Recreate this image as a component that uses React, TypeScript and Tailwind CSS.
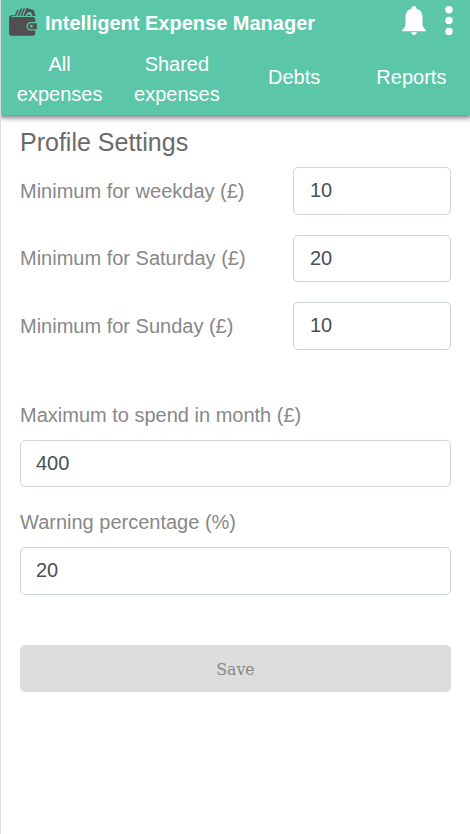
import React from "react";

const tabs = [
  { label: "All expenses", offset: "pt-px" },
  { label: "Shared expenses", offset: "pt-px" },
  { label: "Debts", offset: "pt-[14px]" },
  { label: "Reports", offset: "pt-[14px]" },
];

const minimums = [
  { label: "Minimum for weekday (£)", value: "10" },
  { label: "Minimum for Saturday (£)", value: "20" },
  { label: "Minimum for Sunday (£)", value: "10" },
];

function WalletIcon() {
  return (
    <svg className="h-[29px] w-[29px] shrink-0" viewBox="0 0 29 29" fill="#505050">
      <path d="M3.5 10 H25 Q27.2 10 27.2 12.2 V15 H22.6 a4.2 4.2 0 0 0 0 8.4 H27.2 V26.4 Q27.2 28.8 25 28.8 H3.4 Q1.1 28.8 1.1 26.4 V10.5 Q1.1 8.2 3.5 8.2 H6.4 V9 H3.5 Z" />
      <path d="M22.8 16.2 H28.8 V22.2 H22.8 a3 3 0 0 1 0 -6 Z" />
      <circle cx="23.4" cy="19.2" r="1.4" fill="#5bc6a8" />
      <path d="M7.2 9 L10.2 3 M10.2 9 L13.6 1.6 M13.2 9 L16.4 1.2" stroke="#505050" strokeWidth="1.5" />
      <path d="M15.4 9 L18.6 0.8 L26 3.6 L27.4 9 H24.6 L22.8 4.9 L19.4 5.4 L17.4 9 Z" />
      <path d="M19 9 Q20.5 6.2 22.8 9 Z" />
    </svg>
  );
}

function BellIcon() {
  return (
    <svg className="h-[30px] w-6" viewBox="0 0 24 30" fill="white">
      <path d="M12 0 C13.5 0 14.5 1.1 14.5 2.8 C18.5 3.8 20.5 6.7 20.5 11 V18 C20.5 20.5 21.2 21.2 23.2 23.2 Q24 24 24 25.3 H0 Q0 24 .8 23.2 C2.8 21.2 3.5 20.5 3.5 18 V11 C3.5 6.7 5.5 3.8 9.5 2.8 C9.5 1.1 10.5 0 12 0 Z" />
      <path d="M9 26.3 H15 Q14.3 29.2 12 29.2 Q9.7 29.2 9 26.3 Z" />
    </svg>
  );
}

function MenuIcon() {
  return (
    <svg className="h-[30px] w-2" viewBox="0 0 8 30" fill="white">
      <circle cx="4" cy="3.7" r="3.7" />
      <circle cx="4" cy="14.5" r="3.7" />
      <circle cx="4" cy="25.4" r="3.7" />
    </svg>
  );
}

const inputClass =
  "block rounded-[5px] border border-[#ced4da] bg-white text-[20px] text-[#495057] outline-none";

export default function App() {
  return (
    <div className="min-h-[834px] overflow-hidden border-l border-[#dcdcdc] bg-white font-['Liberation_Sans',Arial,sans-serif] text-[20px] text-[#888]">
      <header className="h-[115px] bg-[#5bc6a8] text-white shadow-[0_2px_5px_1px_rgba(0,0,0,0.5)]">
        <div className="flex h-12 items-start pt-[7px] pr-[17px] pl-[7px]">
          <WalletIcon />
          <h1 className="ml-2 text-[20px] leading-8 font-bold">Intelligent Expense Manager</h1>
          <div className="mt-[-1px] ml-auto flex gap-[19px]">
            <BellIcon />
            <MenuIcon />
          </div>
        </div>
        <nav className="grid grid-cols-4 items-start text-center leading-[30px]">
          {tabs.map(({ label, offset }) => (
            <a key={label} className={`px-3 ${offset}`}>{label}</a>
          ))}
        </nav>
      </header>
      <main className="px-[19px]">
        <h2 className="pt-2 text-[25px] leading-[38px] text-[#6a6a6a]">Profile Settings</h2>
        <div className="mt-[6px] flex flex-col gap-5">
          {minimums.map(({ label, value }) => (
            <div key={label} className="flex items-center justify-between">
              <label>{label}</label>
              <input className={`${inputClass} h-[47.5px] w-[158px] px-4`} defaultValue={value} />
            </div>
          ))}
        </div>
        <label className="mt-[50px] block leading-[30px]">Maximum to spend in month (£)</label>
        <input className={`${inputClass} mt-[10px] h-[47px] w-full px-[15px]`} defaultValue="400" />
        <label className="mt-5 block leading-[30px]">Warning percentage (%)</label>
        <input className={`${inputClass} mt-[10px] h-12 w-full px-[15px]`} defaultValue="20" />
        <button
          disabled
          className="mt-[50px] block h-[47px] w-full rounded-[5px] bg-[#ddd] pt-0.5 font-['DejaVu_Serif_Condensed','DejaVu_Serif',serif] text-[17.5px] text-[#888]"
        >
          Save
        </button>
      </main>
    </div>
  );
}
